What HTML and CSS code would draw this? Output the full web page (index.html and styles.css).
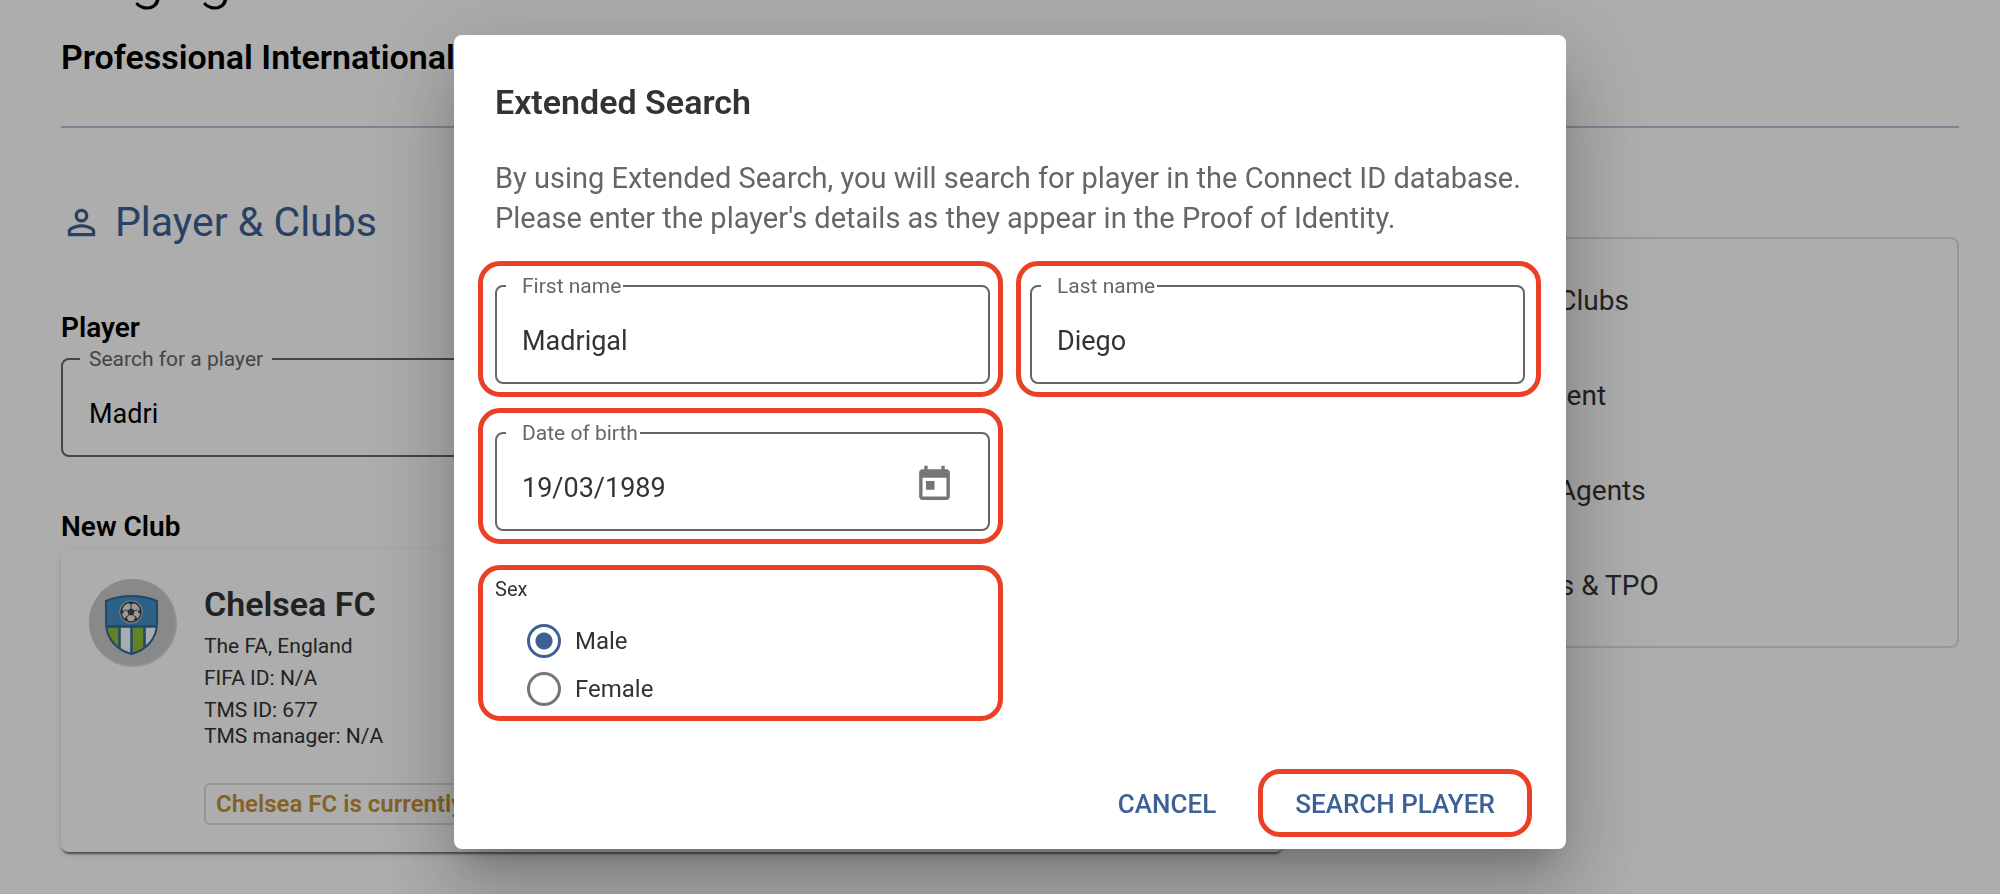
FILE: index.html
```html
<!DOCTYPE html>
<html lang="en">
<head>
<meta charset="utf-8">
<title>Engage</title>
<link rel="stylesheet" href="styles.css">
</head>
<body>
<div class="page">
  <header class="page-header">
    <h1 class="page-title">Engage</h1>
    <p class="page-subtitle">Professional International</p>
  </header>
  <div class="columns">
    <main class="main">
      <h2 class="section-title">
        <svg class="section-icon" viewBox="0 0 24 24" aria-hidden="true"><path d="M12 5.9a2.1 2.1 0 1 1 0 4.2 2.1 2.1 0 0 1 0-4.2m0 9c2.97 0 6.1 1.46 6.1 2.1v1.1H5.9V17c0-.64 3.13-2.1 6.1-2.1M12 4C9.79 4 8 5.79 8 8s1.79 4 4 4 4-1.79 4-4-1.79-4-4-4zm0 9c-2.67 0-8 1.34-8 4v3h16v-3c0-2.66-5.33-4-8-4z"/></svg>
        Player &amp; Clubs
      </h2>
      <h3 class="group-title">Player</h3>
      <fieldset class="field field-search">
        <legend class="field-legend"><label for="player">Search for a player</label></legend>
        <div class="field-row"><input class="field-input" id="player" type="text" value="Madri"></div>
      </fieldset>
      <h3 class="group-title group-title-club">New Club</h3>
      <section class="card">
        <svg class="avatar" viewBox="0 0 88 88" role="img" aria-label="Club crest">
          <defs><clipPath id="shield"><path d="M17 22Q29 17 42.500 17T68 22V44C68 60 57 71 42.500 75C28 71 17 60 17 44Z"/></clipPath></defs>
          <circle cx="44" cy="44" r="44" fill="#d6d6d6"/>
          <circle cx="43" cy="43" r="43" fill="#cbcbcb"/>
          <g clip-path="url(#shield)">
            <rect x="16" y="16" width="54" height="32" fill="#438fc4"/>
            <rect x="16" y="48" width="54" height="28" fill="#fafcff"/>
            <rect x="16" y="48" width="14" height="28" fill="#92bf3e"/>
            <rect x="43" y="48" width="12" height="28" fill="#92bf3e"/>
            <path d="M16 47.500H70M30.500 47V76M42.500 47V76M55.500 47V76" stroke="#2e6c9c" stroke-width="2.500"/>
          </g>
          <path d="M17 22Q29 17 42.500 17T68 22V44C68 60 57 71 42.500 75C28 71 17 60 17 44Z" fill="none" stroke="#2e6c9c" stroke-width="2"/>
          <circle cx="42" cy="33" r="11.500" fill="#d8d8d8"/>
          <circle cx="42" cy="33" r="10" fill="#e4e4e4" stroke="#444" stroke-width="1.500"/>
          <path d="M42 29l3.800 2.800-1.500 4.500h-4.600l-1.500-4.500zM38.500 23.500h7L42 26zM51.500 30l.300 5.500-3.300-2.800zM32.500 30l-.300 5.500 3.300-2.800zM35.500 40.500l1.500-3.300 2.700 4.800zM48.500 40.500L47 37.200 44.300 42z" fill="#444"/>
          <path d="M42 29v-3M45.800 31.800l2.700-1M44.300 36.300l2.700 2M39.700 36.300l-2.700 2M38.200 31.800l-2.700-1" stroke="#444" stroke-width="1"/>
        </svg>
        <div class="club">
          <h4 class="club-name">Chelsea FC</h4>
          <p class="club-line">The FA, England</p>
          <p class="club-line">FIFA ID: N/A</p>
          <p class="club-line">TMS ID: 677</p>
          <p class="club-line club-line-tight">TMS manager: N/A</p>
          <p class="notice">Chelsea FC is currently the new club</p>
        </div>
      </section>
    </main>
    <nav class="steps">
      <a class="step" href="#clubs">Player &amp; Clubs</a>
      <a class="step" href="#employment">Employment</a>
      <a class="step" href="#agents">Football Agents</a>
      <a class="step" href="#payments">Payments &amp; TPO</a>
    </nav>
  </div>
</div>

<div class="backdrop">
  <div class="dialog" role="dialog" aria-modal="true" aria-labelledby="dialog-title">
    <div class="dialog-body">
      <h2 class="dialog-title" id="dialog-title">Extended Search</h2>
      <p class="dialog-text">By using Extended Search, you will search for player in the Connect ID database.<br>Please enter the player's details as they appear in the Proof of Identity.</p>
      <div class="form">
        <div class="mark mark-start">
          <fieldset class="field">
            <legend class="field-legend"><label for="first">First name</label></legend>
            <div class="field-row"><input class="field-input" id="first" type="text" value="Madrigal"></div>
          </fieldset>
        </div>
        <div class="mark">
          <fieldset class="field">
            <legend class="field-legend"><label for="last">Last name</label></legend>
            <div class="field-row"><input class="field-input" id="last" type="text" value="Diego"></div>
          </fieldset>
        </div>
        <div class="mark mark-start">
          <fieldset class="field">
            <legend class="field-legend"><label for="dob">Date of birth</label></legend>
            <div class="field-row">
              <input class="field-input" id="dob" type="text" value="19/03/1989">
              <button class="date-button" type="button" aria-label="Open calendar">
                <svg class="date-icon" viewBox="0 0 24 24" aria-hidden="true"><path d="M19 3h-1V1h-2v2H8V1H6v2H5c-1.110 0-1.990.9-1.990 2L3 19c0 1.100.89 2 2 2h14c1.100 0 2-.9 2-2V5c0-1.100-.9-2-2-2zm0 16H5V8h14v11zM7 10h5v5H7z"/></svg>
              </button>
            </div>
          </fieldset>
        </div>
        <div class="mark mark-start mark-sex">
          <fieldset class="sex">
            <legend class="sex-legend">Sex</legend>
            <div class="options">
              <label class="option"><input class="radio" type="radio" name="sex" checked>Male</label>
              <label class="option"><input class="radio" type="radio" name="sex">Female</label>
            </div>
          </fieldset>
        </div>
      </div>
    </div>
    <div class="actions">
      <button class="button" type="button">CANCEL</button>
      <button class="button button-marked" type="button">SEARCH PLAYER</button>
    </div>
  </div>
</div>
</body>
</html>
```

FILE: styles.css
```css
* {
  box-sizing: border-box;
}

body {
  margin: 0;
  height: 100vh;
  overflow: hidden;
  background: #fff;
  color: #000;
  font-family: Roboto, "Liberation Sans", sans-serif;
}

h1, h2, h3, h4, p, fieldset, legend {
  margin: 0;
  padding: 0;
}

.page {
  padding: 0 41px 0 61px;
}

.page-header {
  padding-bottom: 49px;
  border-bottom: 2px solid #b5c6d9;
}

.page-title {
  margin-top: -60px;
  font-size: 62px;
  line-height: 72px;
  font-weight: 300;
}

.page-subtitle {
  margin-top: 25px;
  font-size: 34px;
  line-height: 40px;
  font-weight: 600;
}

.columns {
  display: grid;
  grid-template-columns: minmax(0, 1222fr) minmax(0, 636fr);
  gap: 40px;
  align-items: start;
}

.section-title {
  display: flex;
  align-items: center;
  gap: 13px;
  margin-top: 70px;
  color: #3d6194;
  font-size: 41px;
  line-height: 48px;
  font-weight: 400;
}

.section-icon {
  width: 41px;
  height: 41px;
  fill: currentColor;
}

.group-title {
  margin: 64px 0 1px;
  font-size: 28px;
  line-height: 36px;
  font-weight: 600;
}

.group-title-club {
  margin-top: 52px;
}

.field {
  min-width: 0;
  padding: 0 9px;
  border: 2px solid #666;
  border-radius: 8px;
}

.field-legend {
  padding: 0 2px 0 16px;
  color: #666;
  font-size: 21px;
  line-height: 24px;
}

.field-search {
  padding: 0 17px;
}

.field-search .field-legend {
  padding: 0 9px;
}

.field-search .field-input {
  padding-left: 9px;
  color: #000;
}

.field-row {
  display: flex;
  align-items: center;
  height: 84px;
}

.field-input {
  flex: 1;
  min-width: 0;
  height: 84px;
  padding: 2px 0 0 16px;
  border: 0;
  outline: 0;
  background: none;
  color: #333;
  font: inherit;
  font-size: 27px;
}

.card {
  display: flex;
  align-items: flex-start;
  gap: 27px;
  margin-top: 5px;
  padding: 29px 28px 27px;
  border-radius: 8px;
  box-shadow: 0 4px 2px -2px rgba(0, 0, 0, 0.4), 0 2px 2px rgba(0, 0, 0, 0.14), 0 2px 6px rgba(0, 0, 0, 0.12);
}

.avatar {
  flex: none;
  width: 88px;
  height: 88px;
}

.club {
  flex: 1;
  min-width: 0;
  padding-top: 5px;
  color: #333;
}

.club-name {
  margin-bottom: 9px;
  font-size: 34px;
  line-height: 40px;
  font-weight: 600;
}

.club-line {
  margin-top: 6px;
  font-size: 21px;
  line-height: 26px;
}

.club-line-tight {
  margin-top: 0;
}

.notice {
  margin-top: 34px;
  padding: 4px 10px;
  border: 2px solid #dedede;
  border-radius: 6px;
  color: #c48f38;
  font-size: 24px;
  line-height: 30px;
  font-weight: 600;
}

.steps {
  display: flex;
  flex-direction: column;
  gap: 55px;
  margin-top: 109px;
  padding: 42px 125px 40px;
  border: 2px solid #dedede;
  border-radius: 8px;
}

.step {
  color: #333;
  font-size: 28px;
  line-height: 40px;
  text-decoration: none;
}

.backdrop {
  position: fixed;
  inset: 0;
  display: flex;
  justify-content: center;
  align-items: flex-start;
  padding: 35px 0 0 20px;
  background: rgba(0, 0, 0, 0.32);
}

.dialog {
  width: 100%;
  max-width: 1112px;
  border-radius: 8px;
  background: #fff;
  box-shadow: 0 22px 30px -14px rgba(0, 0, 0, 0.2), 0 48px 76px 6px rgba(0, 0, 0, 0.14), 0 18px 92px 16px rgba(0, 0, 0, 0.12);
}

.dialog-body {
  padding: 47px 41px 0;
}

.dialog-title {
  color: #333;
  font-size: 34px;
  line-height: 40px;
  font-weight: 600;
}

.dialog-text {
  margin-top: 36px;
  color: #666;
  font-size: 29px;
  line-height: 40px;
  white-space: nowrap;
}

.form {
  display: grid;
  grid-template-columns: repeat(2, minmax(0, 1fr));
  gap: 37px 40px;
  margin-top: 36px;
}

.mark {
  position: relative;
}

.mark::after {
  content: "";
  position: absolute;
  inset: -13px -16px -13px -14px;
  border: 5px solid #ea4025;
  border-radius: 22px;
  pointer-events: none;
}

.mark-start::after {
  right: -13px;
  left: -17px;
}

.mark-sex {
  grid-column: 1;
  margin-top: 9px;
}

.mark-sex::after {
  top: -12px;
  bottom: -8px;
}

.date-button {
  margin-right: 24px;
  padding: 0 0 5px;
  border: 0;
  background: none;
  line-height: 0;
}

.date-icon {
  width: 41px;
  height: 41px;
  fill: #757575;
}

.sex {
  min-width: 0;
  border: 0;
  color: #333;
}

.sex-legend {
  font-size: 20px;
  line-height: 24px;
}

.options {
  padding: 16px 0 0 32px;
}

.option {
  display: flex;
  align-items: center;
  gap: 14px;
  height: 48px;
  font-size: 24px;
}

.radio {
  appearance: none;
  width: 34px;
  height: 34px;
  margin: 0;
  border: 3px solid #757575;
  border-radius: 50%;
}

.radio:checked {
  border-color: #3d6194;
  background: radial-gradient(circle, #3d6194 8px, transparent 9px);
}

.actions {
  display: flex;
  justify-content: flex-end;
  gap: 25px;
  margin-top: 56px;
  padding: 0 34px 12px;
}

.button {
  min-width: 132px;
  height: 68px;
  padding: 2px 16px 0;
  border: 0;
  background: none;
  color: #3d6194;
  font: inherit;
  font-size: 26px;
  font-weight: 500;
}

.button-marked {
  min-width: 274px;
  border: 5px solid #ea4025;
  border-radius: 22px;
}
```
